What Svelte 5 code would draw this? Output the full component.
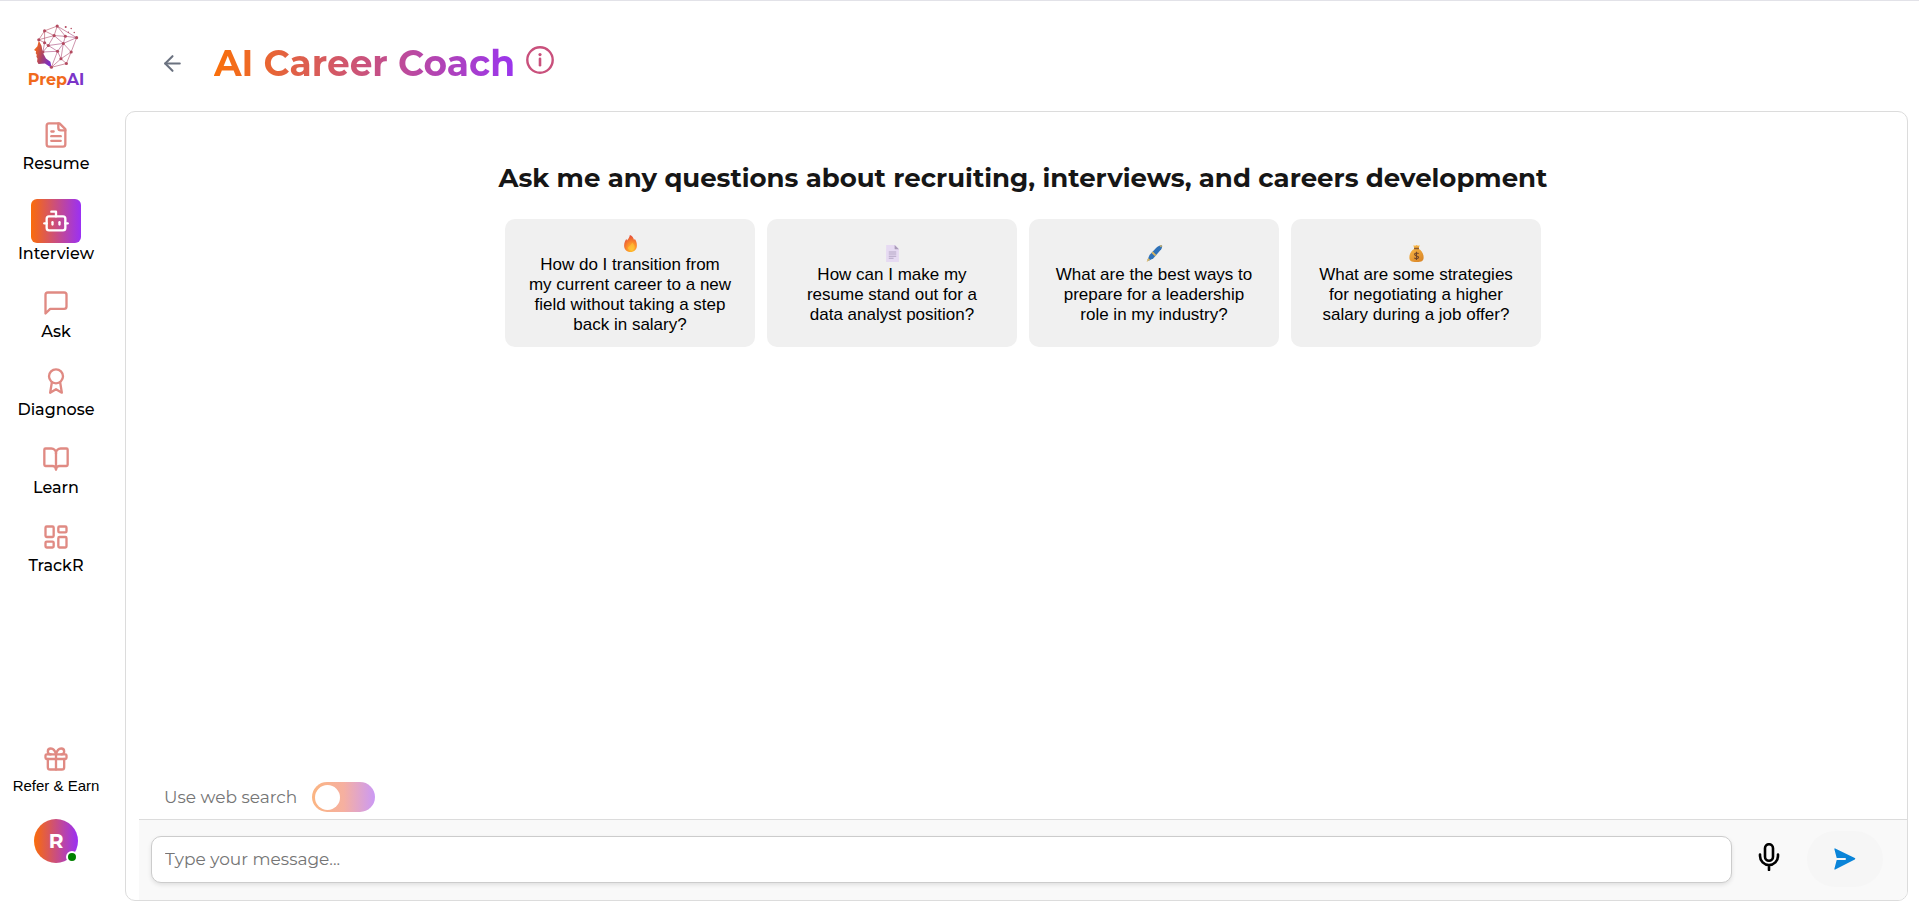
<script>
  const nav = [
    { label: 'Resume', icon: 'resume' },
    { label: 'Interview', icon: 'bot', active: true },
    { label: 'Ask', icon: 'ask' },
    { label: 'Diagnose', icon: 'award' },
    { label: 'Learn', icon: 'book' },
    { label: 'TrackR', icon: 'board' }
  ];

  const icons = {
    resume: ['M15 2H6a2 2 0 0 0-2 2v16a2 2 0 0 0 2 2h12a2 2 0 0 0 2-2V7Z', 'M14 2v4a2 2 0 0 0 2 2h4', 'M10 9H8', 'M16 13H8', 'M16 17H8'],
    bot: ['M12 8V4H8', 'M6 8h12a2 2 0 0 1 2 2v8a2 2 0 0 1-2 2H6a2 2 0 0 1-2-2v-8a2 2 0 0 1 2-2z', 'M2 14h2', 'M20 14h2', 'M15 13v2', 'M9 13v2'],
    ask: ['M21 15a2 2 0 0 1-2 2H7l-4 4V5a2 2 0 0 1 2-2h14a2 2 0 0 1 2 2z'],
    award: ['M18 8a6 6 0 1 1-12 0a6 6 0 1 1 12 0z', 'M15.5 12.9 17 22l-5-3-5 3 1.5-9.1'],
    book: ['M12 7v14', 'M3 18a1 1 0 0 1-1-1V4a1 1 0 0 1 1-1h5a4 4 0 0 1 4 4 4 4 0 0 1 4-4h5a1 1 0 0 1 1 1v13a1 1 0 0 1-1 1h-6a3 3 0 0 0-3 3 3 3 0 0 0-3-3z'],
    board: ['M4 3h5a1 1 0 0 1 1 1v7a1 1 0 0 1-1 1H4a1 1 0 0 1-1-1V4a1 1 0 0 1 1-1z', 'M15 3h5a1 1 0 0 1 1 1v3a1 1 0 0 1-1 1h-5a1 1 0 0 1-1-1V4a1 1 0 0 1 1-1z', 'M15 12h5a1 1 0 0 1 1 1v7a1 1 0 0 1-1 1h-5a1 1 0 0 1-1-1v-7a1 1 0 0 1 1-1z', 'M4 16h5a1 1 0 0 1 1 1v3a1 1 0 0 1-1 1H4a1 1 0 0 1-1-1v-3a1 1 0 0 1 1-1z'],
    gift: ['M4 8h16a1 1 0 0 1 1 1v2a1 1 0 0 1-1 1H4a1 1 0 0 1-1-1V9a1 1 0 0 1 1-1z', 'M12 8v13', 'M19 12v7a2 2 0 0 1-2 2H7a2 2 0 0 1-2-2v-7', 'M7.5 8a2.5 2.5 0 0 1 0-5A4.8 8 0 0 1 12 8a4.8 8 0 0 1 4.5-5 2.5 2.5 0 0 1 0 5'],
    back: ['m12 19-7-7 7-7', 'M19 12H5']
  };

  const prompts = [
    { art: 'fire', text: 'How do I transition from my current career to a new field without taking a step back in salary?' },
    { art: 'page', text: 'How can I make my resume stand out for a data analyst position?' },
    { art: 'pen', text: 'What are the best ways to prepare for a leadership role in my industry?' },
    { art: 'money', text: 'What are some strategies for negotiating a higher salary during a job offer?' }
  ];

  const nodes = [[173,79],[136,93],[119,119],[136,128],[164,107],[147,136],[197,109],[230,113],[191,130],[174,153],[214,155],[184,175],[200,189],[156,200],[131,155]];
  const links = [[0,1],[0,4],[0,6],[0,7],[1,2],[1,4],[1,3],[2,3],[2,4],[3,5],[4,5],[4,6],[4,8],[6,7],[6,8],[7,8],[7,10],[5,8],[5,9],[8,9],[8,10],[8,11],[9,11],[9,14],[3,14],[5,14],[10,11],[10,12],[11,12],[11,13],[9,13],[12,13]];

  let webSearch = $state(false);
  let message = $state('');
</script>

{#snippet glyph(name)}
  <svg class="glyph" viewBox="0 0 24 24" aria-hidden="true">
    {#each icons[name] as d}<path {d} />{/each}
  </svg>
{/snippet}

<div class="page">
  <aside class="sidebar">
    <a class="logo" href="#home">
      <svg viewBox="102 70 135 135" aria-hidden="true">
        <defs>
          <linearGradient id="face" x1="0" x2="1" y1="0" y2="0.5">
            <stop offset="0.2" stop-color="#ee6420" />
            <stop offset="0.6" stop-color="#a8406a" />
            <stop offset="1" stop-color="#7c2fc4" />
          </linearGradient>
          <linearGradient id="mesh" gradientUnits="userSpaceOnUse" x1="119" y1="80" x2="215" y2="200">
            <stop offset="0" stop-color="#bd5554" />
            <stop offset="0.5" stop-color="#a84c84" />
            <stop offset="1" stop-color="#bd5563" />
          </linearGradient>
        </defs>
        <path fill="url(#face)" d="M119 121 L115 138 L105 149 L111 153 L110 159 L113 163 L112 169 L115 174 L114 183 L118 190 L137 189 L157 202 L153 184 L140 174 L131 157 L127 137 Z" />
        <g stroke="url(#mesh)" stroke-width="1.8">
          {#each links as [a, b]}
            <line x1={nodes[a][0]} y1={nodes[a][1]} x2={nodes[b][0]} y2={nodes[b][1]} />
          {/each}
        </g>
        <g fill="#b34a5f">
          {#each nodes as [x, y]}<circle cx={x} cy={y} r="4.600" />{/each}
          <circle cx="198" cy="82" r="3" />
          <circle cx="214" cy="86" r="2.200" />
          <circle cx="206" cy="97" r="2" />
          <circle cx="223" cy="98" r="2.200" />
        </g>
      </svg>
      <span class="brand">Prep<b>AI</b></span>
    </a>

    <nav>
      {#each nav as item}
        <a class="item" class:active={item.active} href="#{item.icon}">
          <span class="tile">{@render glyph(item.icon)}</span>
          <span>{item.label}</span>
        </a>
      {/each}
    </nav>

    <div class="foot">
      <a class="item refer" href="#refer">
        <span class="tile">{@render glyph('gift')}</span>
        <span>Refer &amp; Earn</span>
      </a>
      <button class="avatar" type="button">R<i></i></button>
    </div>
  </aside>

  <main>
    <header>
      <button class="back" type="button" aria-label="Back">{@render glyph('back')}</button>
      <h1>AI Career Coach</h1>
      <button class="info" type="button" aria-label="Information">
        <svg viewBox="0 0 28 28" aria-hidden="true">
          <circle cx="14" cy="14" r="12.7" fill="none" stroke="#c9507c" stroke-width="2.4" />
          <circle cx="14" cy="8.6" r="1.6" fill="#c9507c" />
          <path d="M14 12.8v6.4" stroke="#c9507c" stroke-width="2.6" stroke-linecap="round" />
        </svg>
      </button>
    </header>

    <section class="panel">
      <div class="intro">
        <h2>Ask me any questions about recruiting, interviews, and careers development</h2>
        <div class="cards">
          {#each prompts as p}
            <button class="card" type="button">
              <svg viewBox="0 0 16 16" aria-hidden="true">
                {#if p.art === 'fire'}
                  <defs>
                    <radialGradient id="flame" cx="0.6" cy="0.85" r="0.85">
                      <stop offset="0" stop-color="#ffc62e" />
                      <stop offset="0.5" stop-color="#fb8a2a" />
                      <stop offset="1" stop-color="#e2483c" />
                    </radialGradient>
                  </defs>
                  <path fill="url(#flame)" d="M7.4 0C9.6 .8 11 2.700 11.300 4.800C11.700 4.500 11.900 4 12 3.500C13.300 5.300 14 7.400 14 9.800C14 13.500 11.600 16 8 16C4.400 16 2 13.600 2 10.100C2 7.300 3.200 5.200 4 3.800C4.400 4.200 4.600 4.600 4.700 5.100C5.900 3.700 7.200 2.100 7.400 0Z" />
                  <path fill="#ffc43a" opacity="0.6" d="M9.500 7C11.500 9 12.400 10.600 11.800 12.600C11 15 6.500 15.200 5.600 12.700C5.100 10.900 8.800 9.900 9.500 7Z" />
                {:else if p.art === 'page'}
                  <path fill="#e6daf2" d="M2 0h8.500L14 3.700V16H2z" />
                  <path fill="#a99bb8" d="M10 0l4 4h-3.200a.8.8 0 0 1-.8-.8z" />
                  <path stroke="#b3a5c4" d="M4.500 6.500h7M4.500 8.500h7M4.500 10.500h7M4.500 12.500h4.500" />
                {:else if p.art === 'pen'}
                  <path fill="#2f72b8" d="M14.900.3c.7.700.3 2.700-1.200 4.500L7 12.500l-4.400 2.300L1.400 14l1.900-4.700 6.400-6.800C11.500.7 14.100-.3 14.900.3z" />
                  <path fill="#d8b460" d="M6.400 6.200l3.300 3.200-1.200 1.300-3.300-3.200zM12.800 1l1.600-.9.700.7-.8 1.600zM2 12.200l1.900 1.700L.6 16z" />
                {:else}
                  <defs>
                    <linearGradient id="sack" x1="0" x2="0.6" y1="0" y2="1">
                      <stop offset="0" stop-color="#ffc04a" />
                      <stop offset="1" stop-color="#dc8a2b" />
                    </linearGradient>
                  </defs>
                  <path fill="url(#sack)" d="M5 .3l1.700.5L8 0l1.500.8L11 .3 10 3.500c2.700 1.600 4.700 4.600 4.700 8C14.700 14.600 13.300 16 8 16s-6.700-1.400-6.700-4.500c0-3.400 2-6.400 4.700-8z" />
                  <path fill="#8b5a2f" d="M5.700 2.700h4.600v1.200H5.700z" />
                  <path fill="none" stroke="#71472a" d="M10 8.100C9.500 7.300 6.200 7.100 6.200 8.800S10 10 10 11.600 6.700 13.200 6 12M8 6.300v7.800" />
                {/if}
              </svg>
              <span>{p.text}</span>
            </button>
          {/each}
        </div>
      </div>

      <div class="composer">
        <div class="search">
          <label for="web">Use web search</label>
          <input id="web" class="switch" type="checkbox" role="switch" bind:checked={webSearch} />
        </div>
        <form class="bar" onsubmit={(e) => e.preventDefault()}>
          <input class="message" type="text" aria-label="Message" placeholder="Type your message..." bind:value={message} />
          <button class="mic" type="button" aria-label="Record">
            <svg viewBox="0 0 28 28" aria-hidden="true">
              <rect x="10" y="1.200" width="8" height="16.600" rx="4" />
              <path d="M5 11.500v1.500a9 9 0 0 0 18 0v-1.500M14 22v5" />
            </svg>
          </button>
          <button class="send" type="submit" aria-label="Send">
            <svg viewBox="0 0 22 22" aria-hidden="true">
              <path fill="#0a84d8" d="M1.200.4 20.800 10q1.200.8 0 1.600L1.200 21.600Q.3 21.800.4 20.700L2.700 12H11q1 0 1-1t-1-1H2.700L.4 1.300Q.3.200 1.200.4z" />
            </svg>
          </button>
        </form>
      </div>
    </section>
  </main>
</div>

<style>
  :global(body) {
    margin: 0;
    background: #fff;
  }
  * {
    box-sizing: border-box;
  }
  .page {
    display: flex;
    min-height: 100vh;
    border-top: 1px solid #e2e2e8;
    font-family: Montserrat, Inter, sans-serif;
    color: #000;
  }
  button {
    border: 0;
    padding: 0;
    background: none;
    font-family: inherit;
    cursor: pointer;
  }
  a {
    color: inherit;
    text-decoration: none;
  }
  svg {
    display: block;
    flex: none;
  }
  .glyph {
    width: 28px;
    height: 28px;
    fill: none;
    stroke: currentColor;
    stroke-width: 2;
    stroke-linecap: round;
    stroke-linejoin: round;
  }

  .sidebar {
    flex: none;
    width: 112px;
    padding: 22px 0 41px;
    display: flex;
    flex-direction: column;
    align-items: center;
  }
  .logo {
    display: flex;
    flex-direction: column;
    align-items: center;
  }
  .logo svg {
    width: 46px;
    height: 46px;
  }
  .brand {
    font-size: 16px;
    line-height: 22px;
    font-weight: 700;
    color: #f06a1c;
  }
  .brand b {
    font-weight: inherit;
    color: #7b35c8;
  }
  nav {
    display: flex;
    flex-direction: column;
    gap: 24px;
    margin-top: 30px;
  }
  .item {
    display: flex;
    flex-direction: column;
    align-items: center;
    gap: 4px;
    font-size: 16px;
    line-height: 22px;
    font-weight: 500;
  }
  .tile {
    color: #e08a83;
  }
  .active {
    gap: 0;
  }
  .active .tile {
    padding: 8px 11px;
    border-radius: 6px;
    background: linear-gradient(90deg, #fa6c0a, #9a30f5);
    color: #fff;
  }
  .foot {
    margin-top: auto;
    display: flex;
    flex-direction: column;
    align-items: center;
    gap: 22px;
  }
  .refer {
    gap: 2px;
    font-family: "Liberation Sans", Arial, sans-serif;
    font-size: 15px;
    font-weight: 400;
  }
  .avatar {
    position: relative;
    width: 44px;
    height: 44px;
    border-radius: 50%;
    background: linear-gradient(90deg, #fa6c0a, #9a30f5);
    color: #fff;
    font-size: 20px;
    font-weight: 700;
  }
  .avatar i {
    position: absolute;
    right: 0;
    bottom: 0;
    width: 12px;
    height: 12px;
    border: 2px solid #fff;
    border-radius: 50%;
    background: #008000;
  }

  main {
    flex: 1;
    min-width: 0;
    display: flex;
    flex-direction: column;
    padding: 0 11px 3px 13px;
  }
  header {
    display: flex;
    align-items: center;
    height: 110px;
    padding: 14px 0 0 35px;
  }
  .back {
    color: #6b7280;
  }
  .back :global(svg) {
    width: 25px;
    height: 25px;
  }
  h1 {
    margin: 0 11px 0 29px;
    font-size: 36px;
    line-height: 48px;
    font-weight: 700;
    color: transparent;
    background: linear-gradient(90deg, #fa700a, #9a35ee);
    background-clip: text;
    -webkit-background-clip: text;
  }
  .info {
    padding-bottom: 7px;
  }
  .info svg {
    width: 28px;
    height: 28px;
  }
  .panel {
    flex: 1;
    display: flex;
    flex-direction: column;
    border: 1px solid #dcdcdc;
    border-radius: 10px;
    padding-left: 13px;
    overflow: hidden;
  }
  .intro {
    flex: 1;
    padding: 48px 24px 24px;
    display: flex;
    flex-direction: column;
    align-items: center;
  }
  h2 {
    margin: 0 0 23px;
    font-size: 26px;
    line-height: 36px;
    font-weight: 700;
    color: #161616;
    text-align: center;
  }
  .cards {
    display: grid;
    grid-template-columns: repeat(4, minmax(0, 250px));
    gap: 12px;
  }
  .card {
    min-height: 128px;
    padding: 12px 23px 8px;
    border-radius: 10px;
    background: #f0f0f0;
    display: flex;
    flex-direction: column;
    align-items: center;
    justify-content: center;
    gap: 3px;
    font-family: "Liberation Sans", Arial, sans-serif;
    font-size: 17px;
    line-height: 20px;
    color: #000;
  }
  .card svg {
    width: 17px;
    height: 17px;
  }
  .search {
    display: flex;
    align-items: center;
    gap: 15px;
    padding: 0 25px 7px;
    font-size: 17px;
    color: #757575;
  }
  .switch {
    appearance: none;
    display: flex;
    align-items: center;
    width: 63px;
    height: 30px;
    margin: 0;
    padding: 0 3px;
    border-radius: 15px;
    background: linear-gradient(90deg, #fbb582, #f6b0a0 50%, #cb99f5);
    cursor: pointer;
  }
  .switch::before {
    content: '';
    width: 25px;
    height: 25px;
    border-radius: 50%;
    background: #fff;
  }
  .switch:checked {
    justify-content: flex-end;
  }
  .bar {
    display: flex;
    align-items: center;
    padding: 11px 24px 13px 12px;
    border-top: 1px solid #dcdcdc;
    background: #f9f9f9;
  }
  .message {
    flex: 1;
    min-width: 0;
    height: 47px;
    padding: 0 13px;
    border: 1px solid #ccc;
    border-radius: 10px;
    background: #fff;
    box-shadow: 0 2px 4px rgba(0, 0, 0, 0.1);
    font-family: inherit;
    font-size: 17px;
    outline: none;
  }
  .message::placeholder {
    color: #757575;
  }
  .mic {
    margin: 0 24px 0 23px;
    padding-bottom: 5px;
  }
  .mic svg {
    width: 28px;
    height: 28px;
    fill: none;
    stroke: #000;
    stroke-width: 2.600;
    stroke-linecap: round;
  }
  .send {
    width: 76px;
    height: 56px;
    border-radius: 28px;
    background: #f6f6f6;
    display: flex;
    align-items: center;
    justify-content: center;
  }
  .send svg {
    width: 22px;
    height: 22px;
  }
</style>
